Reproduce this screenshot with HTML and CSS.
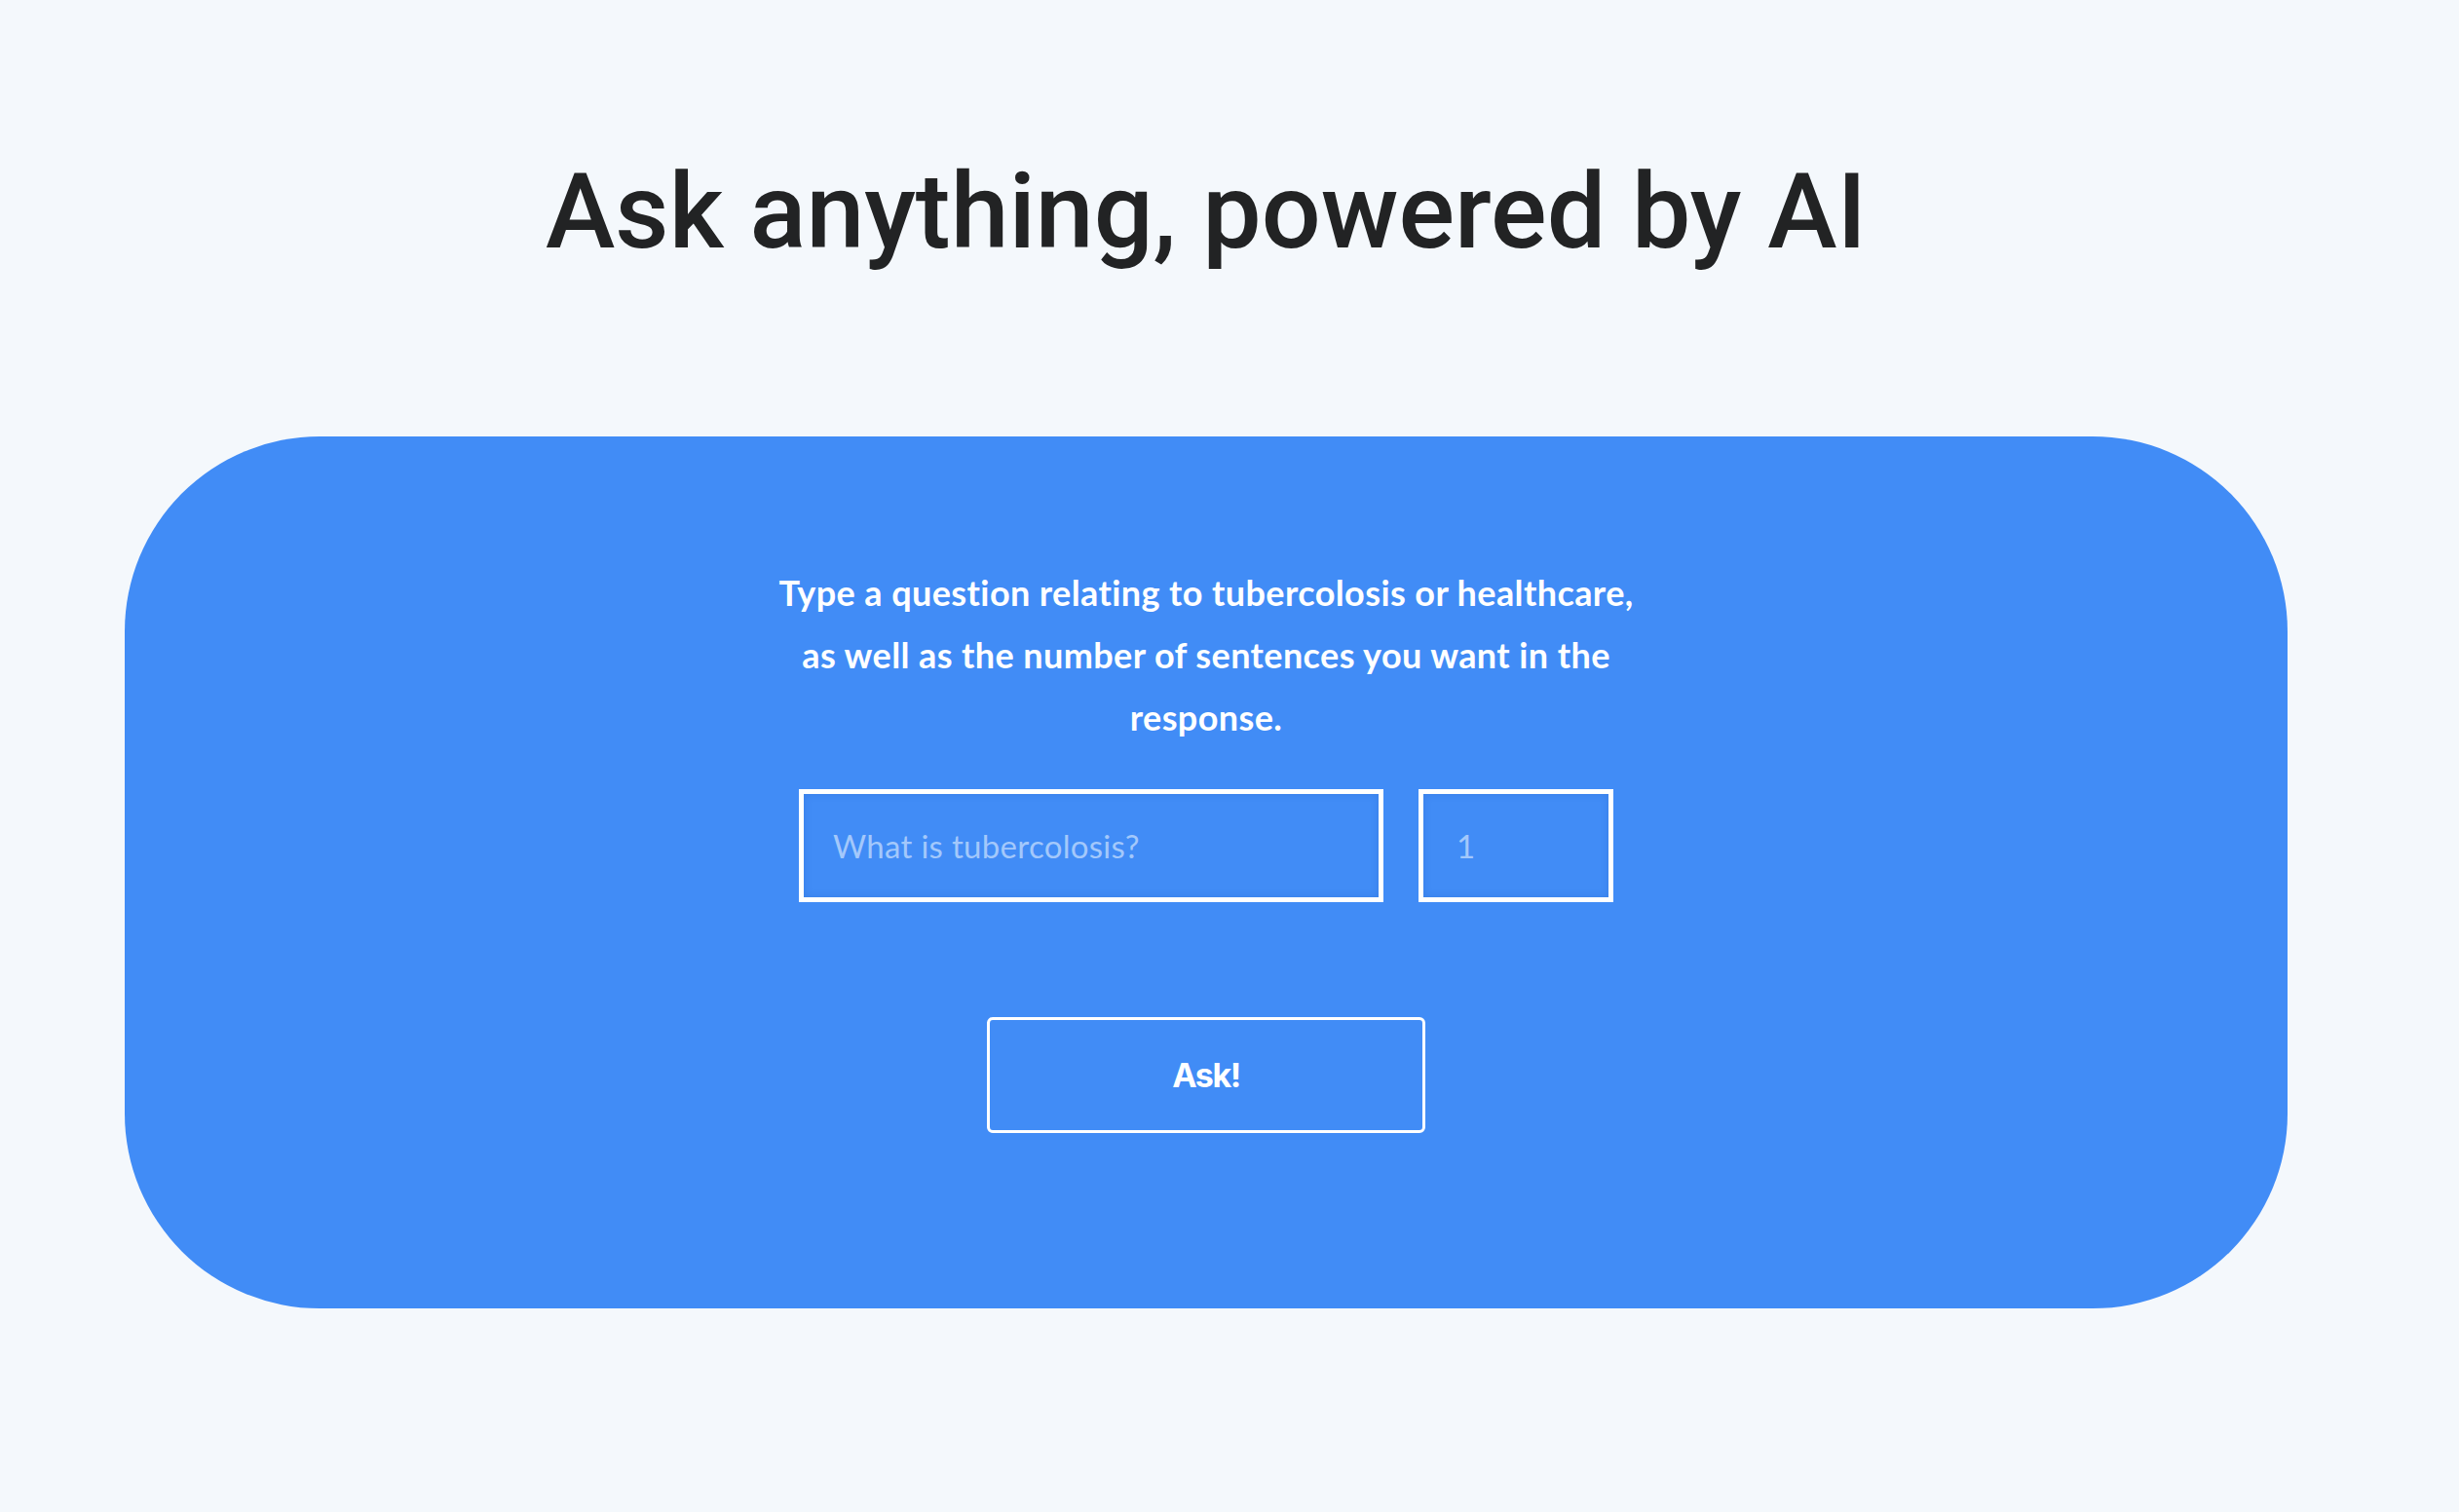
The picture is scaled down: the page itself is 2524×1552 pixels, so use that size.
FILE: index.html
```html
<!DOCTYPE html>
<html lang="en">
<head>
<meta charset="utf-8">
<title>Ask anything, powered by AI</title>
<link rel="stylesheet" href="styles.css">
</head>
<body>
<main class="page">
  <h1 class="title">Ask anything, powered by AI</h1>
  <section class="card">
    <p class="intro">Type a question relating to tubercolosis or healthcare, as well as the number of sentences you want in the response.</p>
    <form class="ask-form">
      <div class="fields">
        <input class="field field-question" type="text" placeholder="What is tubercolosis?">
        <input class="field field-count" type="text" placeholder="1">
      </div>
      <button class="ask-btn" type="button">Ask!</button>
    </form>
  </section>
</main>
</body>
</html>
```

FILE: styles.css
```css
* { box-sizing: border-box; }
html, body {
  margin: 0;
  padding: 0;
  background: #f4f8fc;
}
body {
  min-height: 1552px;
  font-family: "Liberation Sans", Arial, sans-serif;
}
.page {
  padding: 157px 176px 0 128px;
  display: flex;
  flex-direction: column;
  align-items: stretch;
}
.title {
  margin: 0;
  text-align: center;
  font-family: Roboto, "Liberation Sans", Arial, sans-serif;
  font-weight: 500;
  font-size: 107.5px;
  line-height: 121px;
  color: #222324;
  letter-spacing: 0;
}
.card {
  margin-top: 170px;
  background: #418cf6;
  border-radius: 200px;
  padding: 128px 0 180px;
  display: flex;
  flex-direction: column;
  align-items: center;
}
.intro {
  margin: 0;
  width: 900px;
  text-align: center;
  color: #ffffff;
  font-family: Lato, "Open Sans", sans-serif;
  font-weight: 700;
  font-size: 36px;
  letter-spacing: 0.4px;
  line-height: 64px;
}
.ask-form {
  margin-top: 42px;
  display: flex;
  flex-direction: column;
  align-items: center;
  gap: 118px;
}
.fields {
  display: flex;
  gap: 36px;
}
.field {
  height: 116px;
  border: 5px solid #ffffff;
  border-radius: 0;
  background: #418cf6;
  box-shadow: inset 0 0 8px rgba(0, 40, 120, 0.12);
  font-family: Lato, "Open Sans", sans-serif;
  font-weight: 400;
  font-size: 33px;
  letter-spacing: 0.3px;
  color: #ffffff;
  padding: 0 30px;
  outline: none;
}
.field::placeholder {
  color: #a3c8fb;
}
.field-question { width: 600px; }
.field-count { width: 200px; padding-left: 34px; }
.ask-btn {
  width: 450px;
  height: 119px;
  border: 3px solid #ffffff;
  border-radius: 6px;
  background: transparent;
  color: #ffffff;
  font-family: Inter, Roboto, sans-serif;
  font-weight: 700;
  font-size: 34px;
  letter-spacing: -1.5px;
  cursor: pointer;
}
```
